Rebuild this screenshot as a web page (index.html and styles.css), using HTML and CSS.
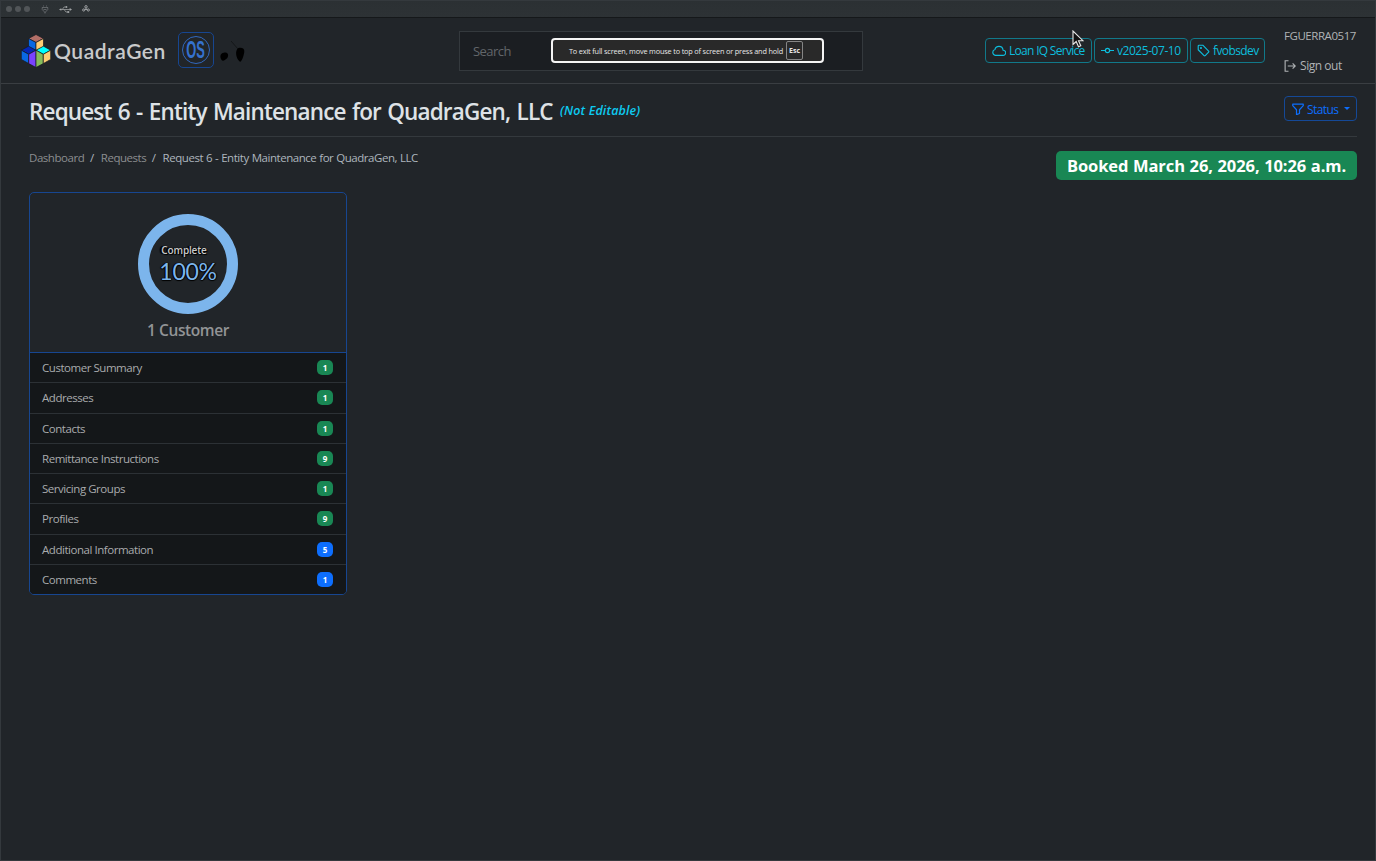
FILE: index.html
```html
<!DOCTYPE html>
<html lang="en">
<head>
  <meta charset="UTF-8">
  <meta name="viewport" content="width=device-width, initial-scale=1.0">
  <title>Request 6 - Entity Maintenance for QuadraGen, LLC</title>
  <link rel="stylesheet" href="styles.css">
</head>
<body>
  <div class="titlebar">
    <span class="dot"></span>
    <span class="dot"></span>
    <span class="dot"></span>
    <svg class="title-icon lamp" width="8" height="9" viewBox="0 0 8 9" fill="none" stroke="currentColor"><path d="M2.500.5v1M5.500.5v1M1 2.500h6M1.200 2.500v2L4 7.500l2.800-3v-2M4 7v1.500M2.500 4.500h3" stroke-width=".8"/></svg>
    <svg class="title-icon usb" width="13" height="9" viewBox="0 0 14 9" fill="none" stroke="currentColor"><path d="M1 4.500h11M3.500 4.500l2-2.700h2M5.500 4.500l2 2.700h2" stroke-width=".8"/><path d="M0 4.500 2.500 3.200v2.600zM14 4.500 11.500 3v3z" fill="currentColor" stroke="none"/><circle cx="8" cy="1.800" r="1" fill="currentColor" stroke="none"/><path d="M9 6.200h2v2H9z" fill="currentColor" stroke="none"/></svg>
    <svg class="title-icon club" width="8" height="8" viewBox="0 0 8 8" fill="none" stroke="currentColor" stroke-width="1"><circle cx="4" cy="1.800" r="1.200"/><circle cx="1.700" cy="5" r="1.100"/><circle cx="6.300" cy="5" r="1.100"/><path d="M4 3.500 3.300 5M4 3.500 4.700 5"/></svg>
  </div>

  <header class="navbar">
    <div class="brand">
      <svg class="cubes" width="30" height="34" viewBox="0 0 30 34" stroke="#171a1f" stroke-width=".7" stroke-linejoin="round">
        <path d="M15 .5 22.500 4.500 15 8.500 7.500 4.500z" fill="#b26f67"/>
        <path d="M7.500 4.500 15 8.500v8.200l-7.500-4z" fill="#0868e4"/>
        <path d="M22.500 4.500 15 8.500v8.200l7.500-4z" fill="#ffce73"/>
        <path d="M7.500 12.200 15 16.200 7.700 20.300.3 16.200z" fill="#0527b5"/>
        <path d="M22.500 12.200 29.700 16.200 22.300 20.300 15 16.200z" fill="#00ffff"/>
        <path d="M.3 16.200 7.700 20.300v9.300L.3 25.400z" fill="#0868e4"/>
        <path d="M7.700 20.300 15 16.200v17.300l-7.300-3.900z" fill="#7943ff"/>
        <path d="M15 16.200 22.300 20.300v9.300L15 33.500z" fill="#86bd5c"/>
        <path d="M22.300 20.300 29.700 16.200v9.200l-7.400 4.200z" fill="#ffce73"/>
      </svg>
      <span class="brand-name">QuadraGen</span>
      <span class="os-badge"><span class="os-ring"><b>OS</b></span></span>
      <svg class="mice" width="26" height="24" viewBox="0 0 26 24">
        <path d="M.5 18.500C0 15.500 2 13.800 4.600 13.600c2.300-.5 3.800 1 3.500 3.200-.3 2.500-1.500 3-2.900 4-2.500 1.800-4.100.7-4.700-2.300z"/>
        <path d="M18.500 9c3.300-.8 6.300.5 5.800 3.700-.3 3-1.800 8.300-3.900 10-2-.5-3.700-4-4.200-7-.4-3 .3-5.600 2.300-6.700z"/>
        <path d="M11 2 18 10" stroke="#000" stroke-width=".4"/>
      </svg>
    </div>

    <div class="search">
      <span class="search-label">Search</span>
      <div class="exit-hint"><span class="hint-text">To exit full screen, move mouse to top of screen or press and hold</span><kbd>Esc</kbd></div>
    </div>

    <div class="tags">
      <a class="tag loan" href="#"><svg width="14" height="14" viewBox="0 0 16 16" fill="none" stroke="currentColor" stroke-width="1.300"><path d="M3.800 13h8.900a2.900 2.900 0 0 0 0-5.900C12.400 4.500 10.600 2.700 8 2.700 5.400 2.700 3.700 4.300 3.400 6.200A3.500 3.500 0 0 0 3.800 13z"/></svg><span>Loan IQ Service</span></a>
      <a class="tag version" href="#"><svg width="13" height="13" viewBox="0 0 16 16" fill="none" stroke="currentColor" stroke-width="1.500"><circle cx="8" cy="8" r="2.600"/><path d="M0 8h5.400M10.600 8H16"/></svg><span>v2025-07-10</span></a>
      <a class="tag env" href="#"><svg width="13" height="13" viewBox="0 0 16 16" fill="none" stroke="currentColor" stroke-width="1.400" stroke-linejoin="round"><path d="M1.500 2.500a1 1 0 0 1 1-1h4.600l7.200 7.200a1 1 0 0 1 0 1.400l-4.200 4.200a1 1 0 0 1-1.400 0L1.500 7.100z"/><circle cx="4.900" cy="4.900" r=".6"/></svg><span>fvobsdev</span></a>
    </div>

    <div class="user">
      <span class="user-name">FGUERRA0517</span>
      <a class="signout" href="#"><svg width="12" height="12" viewBox="0 0 16 16" fill="none" stroke="currentColor" stroke-width="1.500"><path d="M6 1H1.500v14H6M5 8h10M11.500 4.500 15 8l-3.500 3.500"/></svg><span>Sign out</span></a>
    </div>
  </header>

  <main>
    <div class="page-head">
      <h1>Request 6 - Entity Maintenance for QuadraGen, LLC</h1>
      <em class="not-editable">(Not Editable)</em>
      <button class="status"><svg width="12" height="12" viewBox="0 0 16 16" fill="none" stroke="currentColor" stroke-width="1.600" stroke-linejoin="round"><path d="M1 1.500h14v2L10 9v5l-4 1.500V9L1 3.500z"/></svg><span>Status</span><i class="caret"></i></button>
    </div>

    <div class="sub-head">
      <nav class="breadcrumb">
        <a class="crumb-dash" href="#">Dashboard</a>
        <span class="slash">/</span>
        <a class="crumb-req" href="#">Requests</a>
        <span class="slash">/</span>
        <span class="crumb-current">Request 6 - Entity Maintenance for QuadraGen, LLC</span>
      </nav>
      <div class="booked">Booked March 26, 2026, 10:26 a.m.</div>
    </div>

    <section class="card">
      <div class="card-top">
        <div class="ring">
          <span class="ring-label">Complete</span>
          <span class="ring-value">100%</span>
        </div>
        <h2>1 Customer</h2>
      </div>
      <ul>
        <li><span>Customer Summary</span><b class="count">1</b></li>
        <li><span>Addresses</span><b class="count">1</b></li>
        <li><span>Contacts</span><b class="count">1</b></li>
        <li><span>Remittance Instructions</span><b class="count">9</b></li>
        <li><span>Servicing Groups</span><b class="count">1</b></li>
        <li><span>Profiles</span><b class="count">9</b></li>
        <li><span>Additional Information</span><b class="count blue">5</b></li>
        <li><span>Comments</span><b class="count blue">1</b></li>
      </ul>
    </section>
  </main>

  <!-- Mouse pointer -->
  <svg class="pointer" width="12" height="18" viewBox="0 0 12 18"><path d="M1 1v13.500l3.200-3 2.300 5.300 2.300-1-2.300-5.100H11z" fill="#111" stroke="#e8e8e8" stroke-width="1.100"/></svg>
</body>
</html>
```
FILE: styles.css
```css
* {
  margin: 0;
  padding: 0;
  box-sizing: border-box;
}

body {
  font-family: 'Open Sans', 'Noto Sans', sans-serif;
  font-size: 11.5px;
  background: #212529;
  color: #dee2e6;
  height: 861px;
  border: 1px solid #34393d;
  overflow: hidden;
  white-space: nowrap;
}

a {
  color: inherit;
  text-decoration: none;
}

svg {
  flex-shrink: 0;
}

.titlebar {
  height: 17px;
  display: flex;
  align-items: center;
  padding-left: 5px;
  gap: 3px;
  background: linear-gradient(#2b3033, #2d3235);
  border-bottom: 1px solid #15181a;
}

.dot {
  width: 6px;
  height: 6px;
  border-radius: 50%;
  background: #515558;
}

.title-icon {
  color: #a0a3a5;
}

.lamp {
  margin-left: 8px;
  color: #6c7073;
}

.usb {
  margin-left: 7px;
}

.club {
  margin-left: 7px;
}

.navbar {
  height: 66px;
  display: flex;
  align-items: center;
  padding: 0 18px 0 20px;
  border-bottom: 1px solid #3a3e42;
}

.brand {
  width: 438px;
  display: flex;
  align-items: center;
}

.brand-name {
  width: 112px;
  margin-left: 3px;
  font-family: Lato, sans-serif;
  font-size: 21px;
  font-weight: 600;
  letter-spacing: 0.55px;
  color: #c9cacb;
}

.os-badge {
  width: 36px;
  height: 36px;
  margin: -1px 0 0 12px;
  display: flex;
  align-items: center;
  justify-content: center;
  border: 1px solid #174690;
  border-radius: 5px;
}

.os-ring {
  width: 28px;
  height: 28px;
  display: flex;
  align-items: center;
  justify-content: center;
  border: 1.5px solid #3268bd;
  border-radius: 50%;
  font-family: 'Liberation Sans', sans-serif;
  font-size: 23px;
  line-height: 1;
  color: #3572cf;
}

.os-ring b {
  padding-top: 1px;
  transform: scaleX(0.56);
}

.mice {
  margin-left: 6px;
}

.search {
  width: 404px;
  height: 40px;
  display: flex;
  align-items: center;
  padding-left: 13px;
  background: #1b1e22;
  border: 1px solid #34393d;
}

.search-label {
  width: 78px;
  font-size: 13px;
  letter-spacing: -0.55px;
  color: #62666a;
}

.exit-hint {
  width: 273px;
  height: 25px;
  display: flex;
  align-items: center;
  padding-left: 16px;
  background: #292929;
  border: 2px solid #f4f4f4;
  border-radius: 4px;
  color: #e8e8e8;
}

.hint-text {
  width: 217px;
  font-size: 7.3px;
  letter-spacing: -0.16px;
}

kbd {
  width: 17px;
  height: 19px;
  line-height: 17px;
  text-align: center;
  border: 1px solid #858585;
  border-radius: 2px;
  font-family: inherit;
  font-size: 7px;
  font-weight: 700;
}

.tags {
  display: flex;
  gap: 2px;
  margin-left: 122px;
}

.tag {
  height: 25px;
  display: flex;
  align-items: center;
  padding-left: 6px;
  gap: 3px;
  border: 1px solid #11798a;
  border-radius: 4px;
  font-size: 12px;
  color: #0dbddd;
}

.loan {
  width: 107px;
  letter-spacing: -0.7px;
}

.version {
  width: 94px;
  letter-spacing: -0.45px;
}

.env {
  width: 75px;
  letter-spacing: -0.6px;
}

.user {
  width: 74px;
  margin-left: auto;
  display: flex;
  flex-direction: column;
  gap: 14px;
  padding-left: 1px;
  line-height: 16px;
  color: #b0b3b5;
}

.user-name {
  letter-spacing: -0.45px;
}

.signout {
  display: flex;
  align-items: center;
  gap: 4px;
  font-size: 12px;
  letter-spacing: -0.45px;
}

main {
  padding: 0 18px 0 28px;
}

.page-head {
  height: 53px;
  display: flex;
  align-items: center;
  border-bottom: 1px solid #34393d;
}

h1 {
  width: 531px;
  padding-top: 3px;
  font-size: 22.5px;
  font-weight: 600;
  letter-spacing: -0.85px;
  word-spacing: 1.3px;
}

.not-editable {
  font-size: 12.5px;
  font-weight: 600;
  letter-spacing: 0.12px;
  color: #0dcaf0;
}

.status {
  width: 73px;
  height: 25px;
  margin: 0 0 3px auto;
  display: flex;
  align-items: center;
  padding: 1px 0 0 7px;
  gap: 3px;
  background: none;
  border: 1px solid #154997;
  border-radius: 4px;
  font: inherit;
  font-size: 12px;
  letter-spacing: -0.6px;
  color: #0d6efd;
}

.caret {
  margin: -2px 0 0 3px;
  border: 3.5px solid transparent;
  border-top-color: #0d6efd;
  border-bottom: 0;
}

.sub-head {
  height: 55px;
  display: flex;
  justify-content: space-between;
  padding-top: 14px;
}

.breadcrumb {
  display: flex;
  height: 16px;
  line-height: 14px;
  letter-spacing: -0.46px;
  color: #adb5bd;
}

.breadcrumb a {
  color: #8c8e90;
}

.crumb-dash {
  width: 61px;
}

.crumb-req {
  width: 51px;
}

.slash {
  width: 10.8px;
}

.crumb-current {
  word-spacing: 0.4px;
}

.booked {
  width: 301px;
  height: 29px;
  line-height: 29px;
  text-align: center;
  background: #198754;
  border-radius: 5px;
  color: #fff;
  font-size: 16.5px;
  font-weight: 700;
  letter-spacing: -0.08px;
  word-spacing: 0.4px;
}

.card {
  width: 318px;
  border: 1px solid #174690;
  border-radius: 5px;
  overflow: hidden;
}

.card-top {
  height: 160px;
  display: flex;
  flex-direction: column;
  align-items: center;
  padding-top: 21px;
  border-bottom: 1px solid #174690;
}

.ring {
  width: 100px;
  height: 100px;
  display: flex;
  flex-direction: column;
  align-items: center;
  border: 11px solid #7cb5ec;
  border-radius: 50%;
  padding-top: 17px;
}

.ring-label {
  height: 16px;
  margin-right: 8px;
  line-height: 16px;
  font-size: 10px;
  font-weight: 600;
  letter-spacing: -0.15px;
  color: #c9cacb;
  text-shadow: -1px 0 1px #000, 1px 1px 1px #000, -2px 0 1px #000;
}

.ring-value {
  line-height: 26px;
  font-family: Lato, sans-serif;
  font-size: 23px;
  letter-spacing: -0.3px;
  color: #7cb5ec;
  text-shadow: 0 1px 1px #000, 1px 0 1px #000, -1px 0 1px #000;
}

h2 {
  margin-top: 6px;
  line-height: 21px;
  font-size: 15.5px;
  font-weight: 600;
  letter-spacing: -0.4px;
  color: #929496;
}

ul {
  list-style: none;
  background: #141719;
}

li {
  height: 30.25px;
  display: flex;
  align-items: center;
  justify-content: space-between;
  padding: 0 13px 0 12px;
  border-bottom: 1px solid #2c3135;
  letter-spacing: -0.46px;
  color: #a9abad;
}

li:last-child {
  height: 29.25px;
  border-bottom: 0;
}

.count {
  width: 16px;
  height: 15px;
  line-height: 15px;
  text-align: center;
  background: #198754;
  border-radius: 5px;
  color: #fff;
  font-size: 8px;
  letter-spacing: 0;
}

.blue {
  background: #0d6efd;
}

.pointer {
  position: absolute;
  left: 1072px;
  top: 30px;
}
```
